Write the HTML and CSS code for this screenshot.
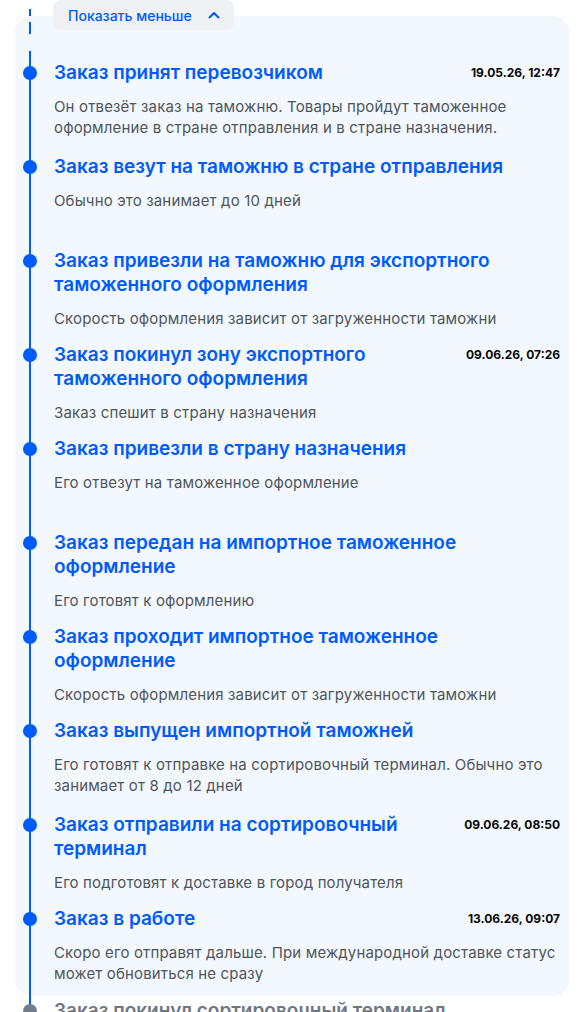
FILE: index.html
```html
<!DOCTYPE html>
<html lang="ru">
<head>
  <meta charset="UTF-8">
  <meta name="viewport" content="width=device-width, initial-scale=1.0">
  <title>Отслеживание заказа</title>
  <link rel="stylesheet" href="styles.css">
</head>
<body>

  <div class="page">
    <span class="dash"></span>

    <button class="more">
      Показать меньше
      <svg width="14" height="14" viewBox="0 0 14 14"><path d="M2.5 9.5 L7 5 L11.5 9.5" fill="none" stroke="#005bff" stroke-width="2" stroke-linecap="round" stroke-linejoin="round"/></svg>
    </button>

    <div class="card">
      <ul class="steps">
        <li class="step">
          <div class="step-head">
            <h3 class="step-title">Заказ принят перевозчиком</h3>
            <span class="step-date">19.05.26, 12:47</span>
          </div>
          <p class="step-text">Он отвезёт заказ на таможню. Товары пройдут таможенное оформление в стране отправления и в стране назначения.</p>
        </li>
        <li class="step">
          <div class="step-head">
            <h3 class="step-title">Заказ везут на таможню в стране отправления</h3>
          </div>
          <p class="step-text">Обычно это занимает до 10 дней</p>
        </li>
        <li class="step">
          <div class="step-head">
            <h3 class="step-title">Заказ привезли на таможню для экспортного таможенного оформления</h3>
          </div>
          <p class="step-text">Скорость оформления зависит от загруженности таможни</p>
        </li>
        <li class="step">
          <div class="step-head">
            <h3 class="step-title">Заказ покинул зону экспортного таможенного оформления</h3>
            <span class="step-date">09.06.26, 07:26</span>
          </div>
          <p class="step-text">Заказ спешит в страну назначения</p>
        </li>
        <li class="step">
          <div class="step-head">
            <h3 class="step-title">Заказ привезли в страну назначения</h3>
          </div>
          <p class="step-text">Его отвезут на таможенное оформление</p>
        </li>
        <li class="step">
          <div class="step-head">
            <h3 class="step-title">Заказ передан на импортное таможенное оформление</h3>
          </div>
          <p class="step-text">Его готовят к оформлению</p>
        </li>
        <li class="step">
          <div class="step-head">
            <h3 class="step-title">Заказ проходит импортное таможенное оформление</h3>
          </div>
          <p class="step-text">Скорость оформления зависит от загруженности таможни</p>
        </li>
        <li class="step">
          <div class="step-head">
            <h3 class="step-title">Заказ выпущен импортной таможней</h3>
          </div>
          <p class="step-text">Его готовят к отправке на сортировочный терминал. Обычно это занимает от 8 до 12 дней</p>
        </li>
        <li class="step">
          <div class="step-head">
            <h3 class="step-title">Заказ отправили на сортировочный терминал</h3>
            <span class="step-date">09.06.26, 08:50</span>
          </div>
          <p class="step-text">Его подготовят к доставке в город получателя</p>
        </li>
        <li class="step">
          <div class="step-head">
            <h3 class="step-title">Заказ в работе</h3>
            <span class="step-date">13.06.26, 09:07</span>
          </div>
          <p class="step-text">Скоро его отправят дальше. При международной доставке статус может обновиться не сразу</p>
        </li>
      </ul>
    </div>

    <!-- следующий, ещё не пройденный этап -->
    <div class="step step-next">
      <div class="step-head">
        <h3 class="step-title">Заказ покинул сортировочный терминал</h3>
      </div>
    </div>
  </div>

</body>
</html>
```

FILE: styles.css
```css
body {
  margin: 0;
  padding: 0;
  font-family: Inter, "Noto Sans", sans-serif;
  background: #ffffff;
  overflow: hidden;
}

.page {
  position: relative;
  padding: 0 15px;
}

/* пунктир над карточкой */
.dash {
  position: absolute;
  left: 29px;
  top: 9px;
  width: 2px;
  height: 25px;
  background: linear-gradient(#005bff 0 7px, transparent 7px 13px, #005bff 13px);
}

.more {
  position: relative;
  z-index: 1;
  display: flex;
  align-items: center;
  gap: 15px;
  height: 30px;
  margin-left: 38px;
  padding: 0 13px 0 15px;
  border: none;
  border-radius: 8px;
  background: #eff1f4;
  color: #005bff;
  font-family: inherit;
  font-size: 14px;
  font-weight: 500;
  cursor: pointer;
}

.card {
  margin-top: -14px;
  padding: 45px 9px 9px 39px;
  border-radius: 16px;
  background: #f3f8fe;
}

.steps {
  position: relative;
  list-style: none;
  margin: 0;
  padding: 0;
}

/* сплошная линия таймлайна */
.steps::before {
  content: "";
  position: absolute;
  left: -25px;
  top: -10px;
  bottom: -18px;
  width: 2px;
  background: #005bff;
}

.step {
  position: relative;
  min-height: 80px;
  padding-bottom: 14px;
}

.step:last-child {
  padding-bottom: 0;
}

.step::before {
  content: "";
  position: absolute;
  left: -31px;
  top: 5px;
  width: 14px;
  height: 14px;
  border-radius: 50%;
  background: #005bff;
}

.step-head {
  display: flex;
  justify-content: space-between;
  align-items: flex-start;
  gap: 12px;
}

.step-title {
  margin: 0;
  font-size: 19px;
  line-height: 24px;
  font-weight: 600;
  color: #005bff;
}

.step-date {
  white-space: nowrap;
  font-size: 12px;
  line-height: 24px;
  font-weight: 700;
  color: #070707;
}

.step-text {
  margin: 11px 0 0;
  font-size: 15px;
  line-height: 21px;
  letter-spacing: 0.15px;
  color: #4f555c;
}

.step-next {
  margin-top: 3px;
  padding-left: 39px;
}

.step-next::before {
  left: 8px;
  background: #707d8b;
}

.step-next .step-title {
  color: #6f7782;
}
```
